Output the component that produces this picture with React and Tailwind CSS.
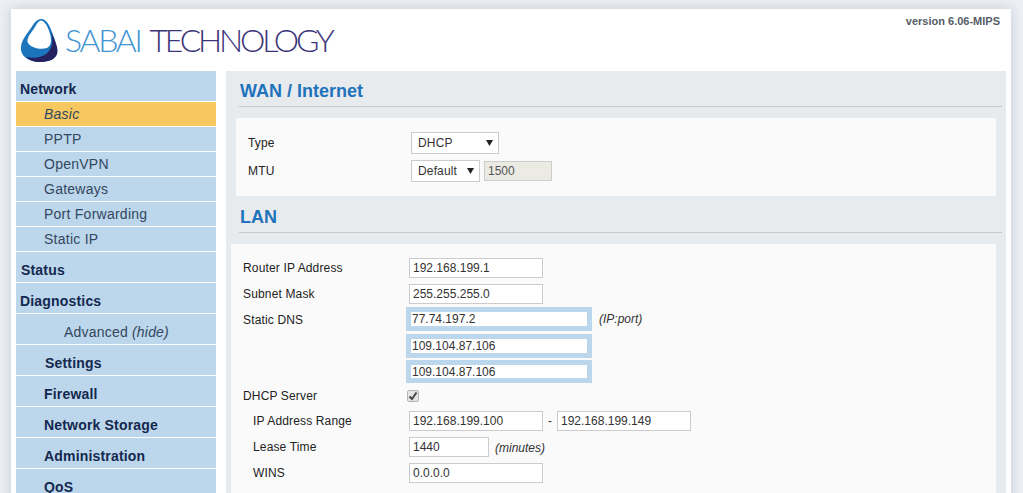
import React from "react";

const Logo = () => (
  <div className="flex items-center pl-[5px] h-[62px]">
    <svg width="36" height="43" viewBox="0 0 36 43" className="shrink-0 overflow-visible">
      <path d="M20 0C26 0 29 7 32 16C35 24 37 30 36 35C34 41 26 43 19 43C10 43 1 39 0 31C-1 22 6 15 10 9C13 4 16 0 20 0Z" fill="#1b75bc" />
      <path d="M20 1.5C24 2 27 8 29 15C31 22 30 27 26 29C20 31 10 29 7 24C5 20 9 15 12 11C15 7 17 1.5 20 1.5Z" fill="#fff" />
      <path d="M30 12C34 22 38 30 36 35C34 41 26 43 19 43C13 43 8 41 5 38C14 40 24 38 28 32C32 27 32 20 30 12Z" fill="#262262" />
    </svg>
    <div className="ml-[8px] flex gap-[9px] font-['Lato',sans-serif] font-light text-[32px] leading-none">
      <span className="text-[#3f94d4] tracking-[-2.3px]">SABAI</span>
      <span className="text-[#3c3478] tracking-[-3.2px]">TECHNOLOGY</span>
    </div>
  </div>
);

const Head = ({ children, indent = "pl-1" }) => (
  <div className={`h-[30px] mb-px pt-[6px] bg-[#bcd6eb] flex items-center ${indent} text-[14px] font-bold tracking-[0.18px] text-[#14284f]`}>{children}</div>
);

const Item = ({ children, active }) => (
  <div className={`h-6 mb-px flex items-center pl-7 text-[14px] tracking-[0.25px] text-[#33475f] ${active ? "bg-[#f6c85f] italic" : "bg-[#bcd6eb]"}`}>{children}</div>
);

const Sidebar = () => (
  <nav className="w-[200px] shrink-0">
    <Head>Network</Head>
    <Item active>Basic</Item>
    <Item>PPTP</Item>
    <Item>OpenVPN</Item>
    <Item>Gateways</Item>
    <Item>Port Forwarding</Item>
    <Item>Static IP</Item>
    <Head indent="pl-[5px]">Status</Head>
    <Head>Diagnostics</Head>
    <div className="h-[30px] mb-px pt-[6px] bg-[#bcd6eb] flex items-center pl-12 text-[14px] tracking-[0.2px] text-[#33475f]">
      Advanced&nbsp;<i>(hide)</i>
    </div>
    <Head indent="pl-[29px]">Settings</Head>
    <Head indent="pl-7">Firewall</Head>
    <Head indent="pl-7">Network Storage</Head>
    <Head indent="pl-7">Administration</Head>
    <Head indent="pl-7">QoS</Head>
  </nav>
);

const Section = ({ children }) => (
  <div className="ml-[13px] mr-1 h-[36px] pt-[6px] pl-px border-b border-[#c9c9c9] flex items-center text-[18px] font-bold text-[#1f72bc]">{children}</div>
);

const Label = ({ children, sub }) => (
  <div className={`w-[166px] shrink-0 text-[12px] tracking-[0.15px] text-[#222] ${sub ? "pl-[10px]" : ""}`}>{children}</div>
);

const Field = ({ value, w = "w-[134px]" }) => (
  <div className={`${w} h-5 border border-[#cccccc] bg-white px-[3px] flex items-center text-[12px] text-[#333]`}>{value}</div>
);

const DnsField = ({ value, h = "h-6" }) => (
  <div className={`w-[186px] ${h} border-[5px] border-[#bcd6eb] bg-white pl-[1px] flex items-center text-[12px] text-[#333]`}>{value}</div>
);

const Select = ({ value, w }) => (
  <div className={`${w} h-[22px] border border-[#cccccc] bg-white pl-[6px] pr-[5px] flex items-center justify-between text-[12px] tracking-[0.15px] text-[#333]`}>
    {value}
    <svg width="7" height="6" viewBox="0 0 7 6"><path d="M0 0H7L3.5 6Z" fill="#222" /></svg>
  </div>
);

const Row = ({ children, cls = "h-[26px] items-center" }) => <div className={`flex ${cls}`}>{children}</div>;

const Note = ({ children }) => <i className="text-[12px] text-[#333]">{children}</i>;

export default function App() {
  return (
    <div className="h-[493px] overflow-hidden bg-[#eceff3] font-['Liberation_Sans',Arial,sans-serif] pt-[9px] pl-[11px]">
      <div className="relative w-[1000px] min-h-[520px] bg-white shadow-[0_0_10px_rgba(130,150,170,0.4)] px-[5px]">
        <div className="absolute right-[11px] top-[4px] text-[11px] font-bold text-[#555c66]">version 6.06-MIPS</div>
        <Logo />
        <div className="flex gap-[10px]">
          <Sidebar />
          <main className="w-[780px] bg-[#e8ebee] pb-4">
            <Section>WAN / Internet</Section>
            <div className="mx-[10px] mt-[11px] h-[78px] bg-[#fafafa] pl-3 pt-[11px]">
              <Row cls="h-[28px] items-center">
                <Label>Type</Label>
                <div className="ml-[-3px]"><Select value="DHCP" w="w-[88px]" /></div>
              </Row>
              <Row cls="h-[28px] items-center">
                <Label>MTU</Label>
                <div className="ml-[-3px] flex items-center gap-[4px]">
                  <Select value="Default" w="w-[69px]" />
                  <div className="w-[68px] h-5 border border-[#cccccc] bg-[#ebebe4] pl-[3px] flex items-center text-[12px] text-[#555]">1500</div>
                </div>
              </Row>
            </div>
            <div className="mt-px"><Section>LAN</Section></div>
            <div className="ml-[5px] mr-[10px] mt-[11px] bg-[#fafafa] pl-3 pt-[11px] pb-4">
              <Row><Label>Router IP Address</Label><Field value="192.168.199.1" /></Row>
              <Row><Label>Subnet Mask</Label><Field value="255.255.255.0" /></Row>
              <Row cls="h-[27px] items-start">
                <div className="h-[26px] flex items-center"><Label>Static DNS</Label></div>
                <div className="ml-[-3px] flex items-center gap-[7px]"><DnsField value="77.74.197.2" /><Note>(IP:port)</Note></div>
              </Row>
              <Row cls="h-[26px] items-start"><div className="w-[166px] shrink-0" /><div className="ml-[-3px]"><DnsField value="109.104.87.106" /></div></Row>
              <Row cls="h-[23px] items-start"><div className="w-[166px] shrink-0" /><div className="ml-[-3px]"><DnsField value="109.104.87.106" h="h-[23px]" /></div></Row>
              <Row cls="h-[25px] items-center">
                <Label>DHCP Server</Label>
                <div className="ml-[-2px] size-[12px] rounded-[2px] border border-[#b5b5b5] bg-[#e4e4e4] flex items-center justify-center">
                  <svg width="10" height="10" viewBox="0 0 10 10"><path d="M1.5 5.5L4 8L8.5 1.5" fill="none" stroke="#444" strokeWidth="2" /></svg>
                </div>
              </Row>
              <Row>
                <Label sub>IP Address Range</Label>
                <Field value="192.168.199.100" />
                <span className="mx-[5px] text-[12px] text-[#333]">-</span>
                <Field value="192.168.199.149" />
              </Row>
              <Row>
                <Label sub>Lease Time</Label>
                <Field value="1440" w="w-[80px]" />
                <div className="ml-[6px]"><Note>(minutes)</Note></div>
              </Row>
              <Row><Label sub>WINS</Label><Field value="0.0.0.0" /></Row>
            </div>
          </main>
        </div>
      </div>
    </div>
  );
}
